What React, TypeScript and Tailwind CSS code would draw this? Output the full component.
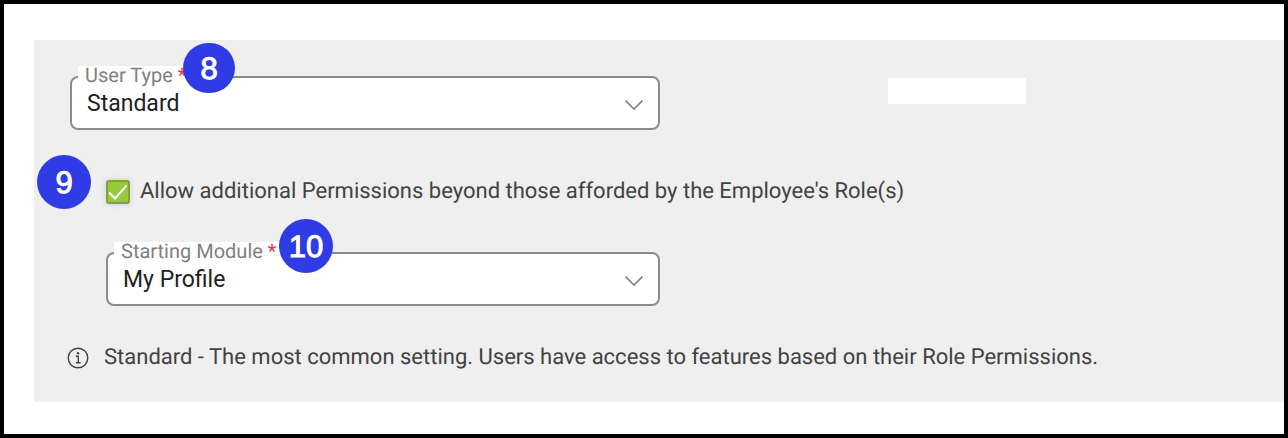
import { useState } from "react";
import type { ReactNode } from "react";

function StepBadge({ className, children }: { className: string; children: ReactNode }) {
  return (
    <span
      className={`absolute z-10 flex items-center justify-center rounded-full bg-[#2f3be5] font-['Liberation_Sans',sans-serif] text-[31px] leading-none text-white [-webkit-text-stroke:1px_white] ${className}`}
    >
      {children}
    </span>
  );
}

type SelectFieldProps = {
  id: string;
  label: string;
  options: string[];
  badge: ReactNode;
};

function SelectField({ id, label, options, badge }: SelectFieldProps) {
  return (
    <div className="relative">
      <select
        id={id}
        className="block h-[54px] w-full appearance-none rounded-lg border-2 border-[#8c8c8c] bg-white pt-0.5 pr-12 pl-[15px] text-[23px] text-[#212121] outline-none"
      >
        {options.map((option) => (
          <option key={option}>{option}</option>
        ))}
      </select>
      <label
        htmlFor={id}
        className="absolute -top-2.5 left-2 bg-white pr-2 pb-0.5 pl-[7px] text-xl leading-[18px] whitespace-nowrap text-[#808080]"
      >
        {label} <span className="text-[#dc3545]">*</span>
      </label>
      <svg
        viewBox="0 0 20 12"
        className="pointer-events-none absolute top-[23px] right-4 h-3 w-5"
        fill="none"
        stroke="#808080"
        strokeWidth="1.7"
        aria-hidden="true"
      >
        <path d="M1.5 1.5 10 10l8.500-8.500" />
      </svg>
      {badge}
    </div>
  );
}

export default function App() {
  const [allowed, setAllowed] = useState(true);

  return (
    <main className="min-h-screen border-4 border-black bg-white pt-9 pb-8 pl-[30px] font-[Roboto,sans-serif] text-[22px] text-[#424242] [text-rendering:geometricPrecision]">
      <section className="bg-[#efefef] px-9 pt-9 pb-[30px]">
        <div className="flex items-start gap-[228px]">
          <div className="w-full max-w-[590px]">
            <SelectField
              id="user-type"
              label="User Type"
              options={["Standard"]}
              badge={<StepBadge className="-top-[33px] left-[113px] h-[50px] w-[52px]">8</StepBadge>}
            />
            <div className="relative mt-[46px] flex h-8 items-center pl-9">
              <StepBadge className="-top-[21px] -left-[33px] size-[54px]">9</StepBadge>
              <label className="flex items-center gap-2.5 leading-8 whitespace-nowrap">
                <span className="relative block size-6">
                  <input
                    type="checkbox"
                    checked={allowed}
                    onChange={(event) => setAllowed(event.target.checked)}
                    className="peer block size-6 appearance-none rounded-[3px] border-2 border-[#7fa03a] bg-white shadow-[0_0_6px_rgba(0,0,0,0.15)] checked:bg-[#97c93d]"
                  />
                  <svg
                    viewBox="0 0 24 24"
                    className="pointer-events-none absolute inset-0 hidden size-6 peer-checked:block"
                    fill="none"
                    stroke="white"
                    strokeWidth="1.9"
                    aria-hidden="true"
                  >
                    <path d="M3 12.500 9 18.500 20.500 5.500" />
                  </svg>
                </span>
                Allow additional Permissions beyond those afforded by the Employee's Role(s)
              </label>
            </div>
            <div className="mt-11 pl-9">
              <SelectField
                id="starting-module"
                label="Starting Module"
                options={["My Profile"]}
                badge={<StepBadge className="-top-[33px] left-[173px] size-[54px]">10</StepBadge>}
              />
            </div>
          </div>
          <div className="mt-0.5 h-[26px] w-[138px] shrink-0 bg-white" />
        </div>
        <p className="mt-[38px] flex items-center gap-3.5 leading-7">
          <svg
            viewBox="0 0 24 24"
            className="-ml-1 size-6 shrink-0"
            fill="none"
            stroke="#424242"
            strokeWidth="1.4"
            aria-hidden="true"
          >
            <circle cx="12" cy="12" r="9.800" />
            <path d="M9.800 10.200h2.500v6.600M9.800 16.800h4.800" />
            <circle cx="12" cy="7.200" r="1.200" fill="#424242" stroke="none" />
          </svg>
          Standard - The most common setting. Users have access to features based on their Role Permissions.
        </p>
      </section>
    </main>
  );
}
